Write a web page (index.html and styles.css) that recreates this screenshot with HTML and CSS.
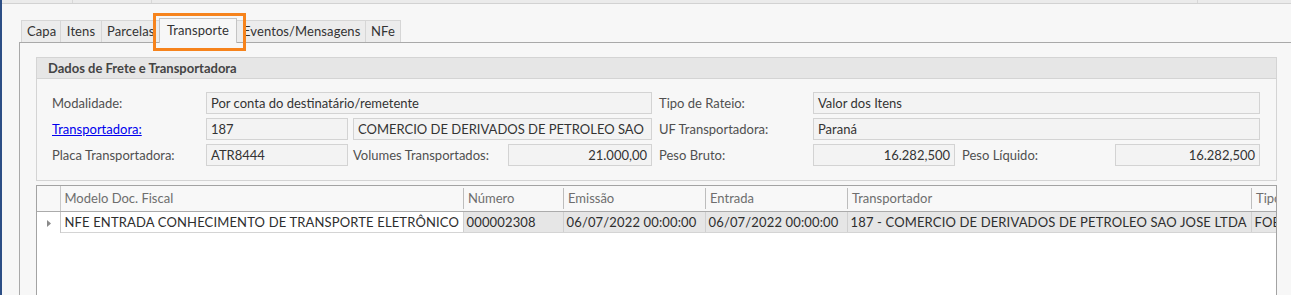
FILE: index.html
```html
<!DOCTYPE html>
<html lang="pt-BR">
<head>
    <meta charset="UTF-8">
    <title>Nota de Entrada - Transporte</title>
    <link rel="stylesheet" href="styles.css">
</head>
<body>
    <div class="window">
        <div class="topbar">
            <span class="seg seg-a"></span>
            <span class="seg seg-b"></span>
            <span class="seg seg-c"></span>
        </div>

        <div class="tabstrip">
            <div class="tab t-capa">Capa</div>
            <div class="tab t-itens">Itens</div>
            <div class="tab t-parc">Parcelas</div>
            <div class="tab active">Transporte</div>
            <div class="tab t-evt">Eventos/Mensagens</div>
            <div class="tab t-nfe">NFe</div>
        </div>

        <div class="panel">
            <div class="group">
                <div class="group-title">Dados de Frete e Transportadora</div>
                <div class="group-body">
                    <div class="row">
                        <span class="lbl w154">Modalidade:</span>
                        <span class="field w446">Por conta do destinatário/remetente</span>
                        <span class="lbl w154 ml7">Tipo de Rateio:</span>
                        <span class="field w447">Valor dos Itens</span>
                    </div>
                    <div class="row">
                        <a href="#" class="lbl link w154">Transportadora:</a>
                        <span class="field w142">187</span>
                        <span class="field w299 ml5">COMERCIO DE DERIVADOS DE PETROLEO SAO</span>
                        <span class="lbl w154 ml7">UF Transportadora:</span>
                        <span class="field w447">Paraná</span>
                    </div>
                    <div class="row">
                        <span class="lbl w154">Placa Transportadora:</span>
                        <span class="field w142">ATR8444</span>
                        <span class="lbl w155 ml5">Volumes Transportados:</span>
                        <span class="field num w144">21.000,00</span>
                        <span class="lbl w154 ml7">Peso Bruto:</span>
                        <span class="field num w142">16.282,500</span>
                        <span class="lbl w153 ml7">Peso Líquido:</span>
                        <span class="field num w145">16.282,500</span>
                    </div>
                </div>
            </div>

            <div class="grid">
                <table>
                    <colgroup>
                        <col style="width:23px">
                        <col style="width:403px">
                        <col style="width:100px">
                        <col style="width:142px">
                        <col style="width:142px">
                        <col style="width:404px">
                        <col style="width:80px">
                    </colgroup>
                    <thead>
                        <tr>
                            <th class="ind"></th>
                            <th class="first"><div class="hd">Modelo Doc. Fiscal</div></th>
                            <th><div class="hd">Número</div></th>
                            <th><div class="hd">Emissão</div></th>
                            <th><div class="hd">Entrada</div></th>
                            <th><div class="hd">Transportador</div></th>
                            <th><div class="hd">Tipo Frete</div></th>
                        </tr>
                    </thead>
                    <tbody>
                        <tr>
                            <td class="ind">
                                <svg width="5" height="7" viewBox="0 0 5 7"><path d="M0 0 L4 3.5 L0 7 Z" fill="#8a8a8a"/></svg>
                            </td>
                            <td class="focus">NFE ENTRADA CONHECIMENTO DE TRANSPORTE ELETRÔNICO</td>
                            <td>000002308</td>
                            <td>06/07/2022 00:00:00</td>
                            <td>06/07/2022 00:00:00</td>
                            <td>187 - COMERCIO DE DERIVADOS DE PETROLEO SAO JOSE LTDA</td>
                            <td>FOB</td>
                        </tr>
                    </tbody>
                </table>
            </div>
        </div>

        <!-- destaque da aba -->
        <div class="highlight"></div>
    </div>
</body>
</html>
```

FILE: styles.css
```css
* {
    box-sizing: border-box;
}

body {
    margin: 0;
    background: #f7f7f7;
    font-family: 'Lato', 'Open Sans', sans-serif;
    font-size: 13px;
    color: #333;
    overflow: hidden;
}

.window {
    position: relative;
    height: 295px;
    border-left: 2px solid #2d4f86;
    overflow: hidden;
}

/* barra superior */
.topbar {
    display: flex;
    height: 4px;
    background: #ebebeb;
    border-bottom: 1px solid #d2d2d2;
}

.seg {
    height: 3px;
    border-right: 1px solid #d8d8d8;
}

.seg-a { width: 71px; }
.seg-b { width: 79px; }
.seg-c { width: 1046px; }

/* abas */
.tabstrip {
    display: flex;
    align-items: flex-end;
    height: 24px;
    margin: 14px 0 0 19px;
}

.tab {
    height: 22px;
    line-height: 21px;
    padding: 0 5px;
    background: #ececec;
    border: 1px solid #d6d6d6;
    border-bottom: none;
    border-left: none;
    color: #333;
    white-space: nowrap;
    text-align: center;
    letter-spacing: 0.1px;
}

.t-capa { width: 40px; border-left: 1px solid #d6d6d6; }
.t-itens { width: 41px; }
.t-parc { width: 61px; text-align: left; padding-left: 5px; }
.t-evt { width: 129px; padding-left: 6px; text-align: left; }
.t-nfe { width: 35px; }

.tab.active {
    position: relative;
    z-index: 2;
    width: 78px;
    height: 25px;
    line-height: 23px;
    margin-left: -4px;
    margin-bottom: -1px;
    padding: 0;
    background: #f7f7f7;
    border: 1px solid #c4c4c4;
    border-bottom: none;
}

/* painel da aba */
.panel {
    margin-left: 17px;
    padding: 14px 14px 0 16px;
    border-top: 1px solid #a9a9a9;
    border-left: 1px solid #a9a9a9;
    height: 260px;
}

.group {
    border: 1px solid #d4d4d4;
    background: #f7f7f7;
}

.group-title {
    height: 21px;
    line-height: 20px;
    padding-left: 11px;
    background: #e6e6e6;
    border-bottom: 1px solid #d4d4d4;
    font-weight: bold;
    color: #444;
}

.group-body {
    padding: 13px 16px 14px 15px;
    display: flex;
    flex-direction: column;
    gap: 4px;
}

.row {
    display: flex;
    height: 22px;
}

.lbl {
    line-height: 22px;
    color: #505050;
    white-space: nowrap;
}

.link {
    color: #0000ee;
    text-decoration: underline;
}

.field {
    height: 22px;
    line-height: 20px;
    padding: 0 4px;
    background: #f3f3f3;
    border: 1px solid #d3d3d3;
    color: #333;
    white-space: nowrap;
    overflow: hidden;
}

.field.num {
    text-align: right;
}

.w142 { width: 142px; }
.w144 { width: 144px; }
.w145 { width: 145px; }
.w153 { width: 153px; }
.w154 { width: 154px; }
.w155 { width: 155px; }
.w299 { width: 299px; }
.w446 { width: 446px; }
.w447 { width: 447px; }
.ml5 { margin-left: 5px; }
.ml7 { margin-left: 7px; }

/* grade de documentos */
.grid {
    margin-top: 4px;
    height: 120px;
    background: #fff;
    border: 1px solid #a3a3a3;
    overflow: hidden;
}

.grid table {
    width: 1294px;
    table-layout: fixed;
    border-collapse: collapse;
}

.grid th {
    height: 25px;
    padding: 2px 0;
    background: #f8f8f8;
    border-bottom: 1px solid #ababab;
    font-weight: normal;
    text-align: left;
    color: #6e6e6e;
}

.grid th .hd {
    height: 21px;
    line-height: 20px;
    padding-left: 4px;
    border-left: 1px solid #bdbdbd;
    white-space: nowrap;
    overflow: hidden;
}

.grid th.first .hd {
    border-left: none;
}

.grid .ind {
    border-right: 1px solid #c9c9c9;
    background: #f8f8f8;
}

.grid td {
    height: 21px;
    padding: 0 3px;
    background: #e6e6e6;
    border-right: 1px solid #d0d0d0;
    border-bottom: 1px solid #d4d4d4;
    white-space: nowrap;
    overflow: hidden;
    color: #2e2e2e;
    letter-spacing: 0.15px;
}

.grid td.focus {
    padding-left: 4px;
    background: #fff;
}

.grid td.ind {
    padding: 0 0 0 10px;
    border-bottom: none;
    background: #fff;
}

/* marcacao laranja sobre a aba */
.highlight {
    position: absolute;
    left: 151px;
    top: 13px;
    width: 93px;
    height: 38px;
    border: 3px solid #f6831c;
    z-index: 5;
}
```
